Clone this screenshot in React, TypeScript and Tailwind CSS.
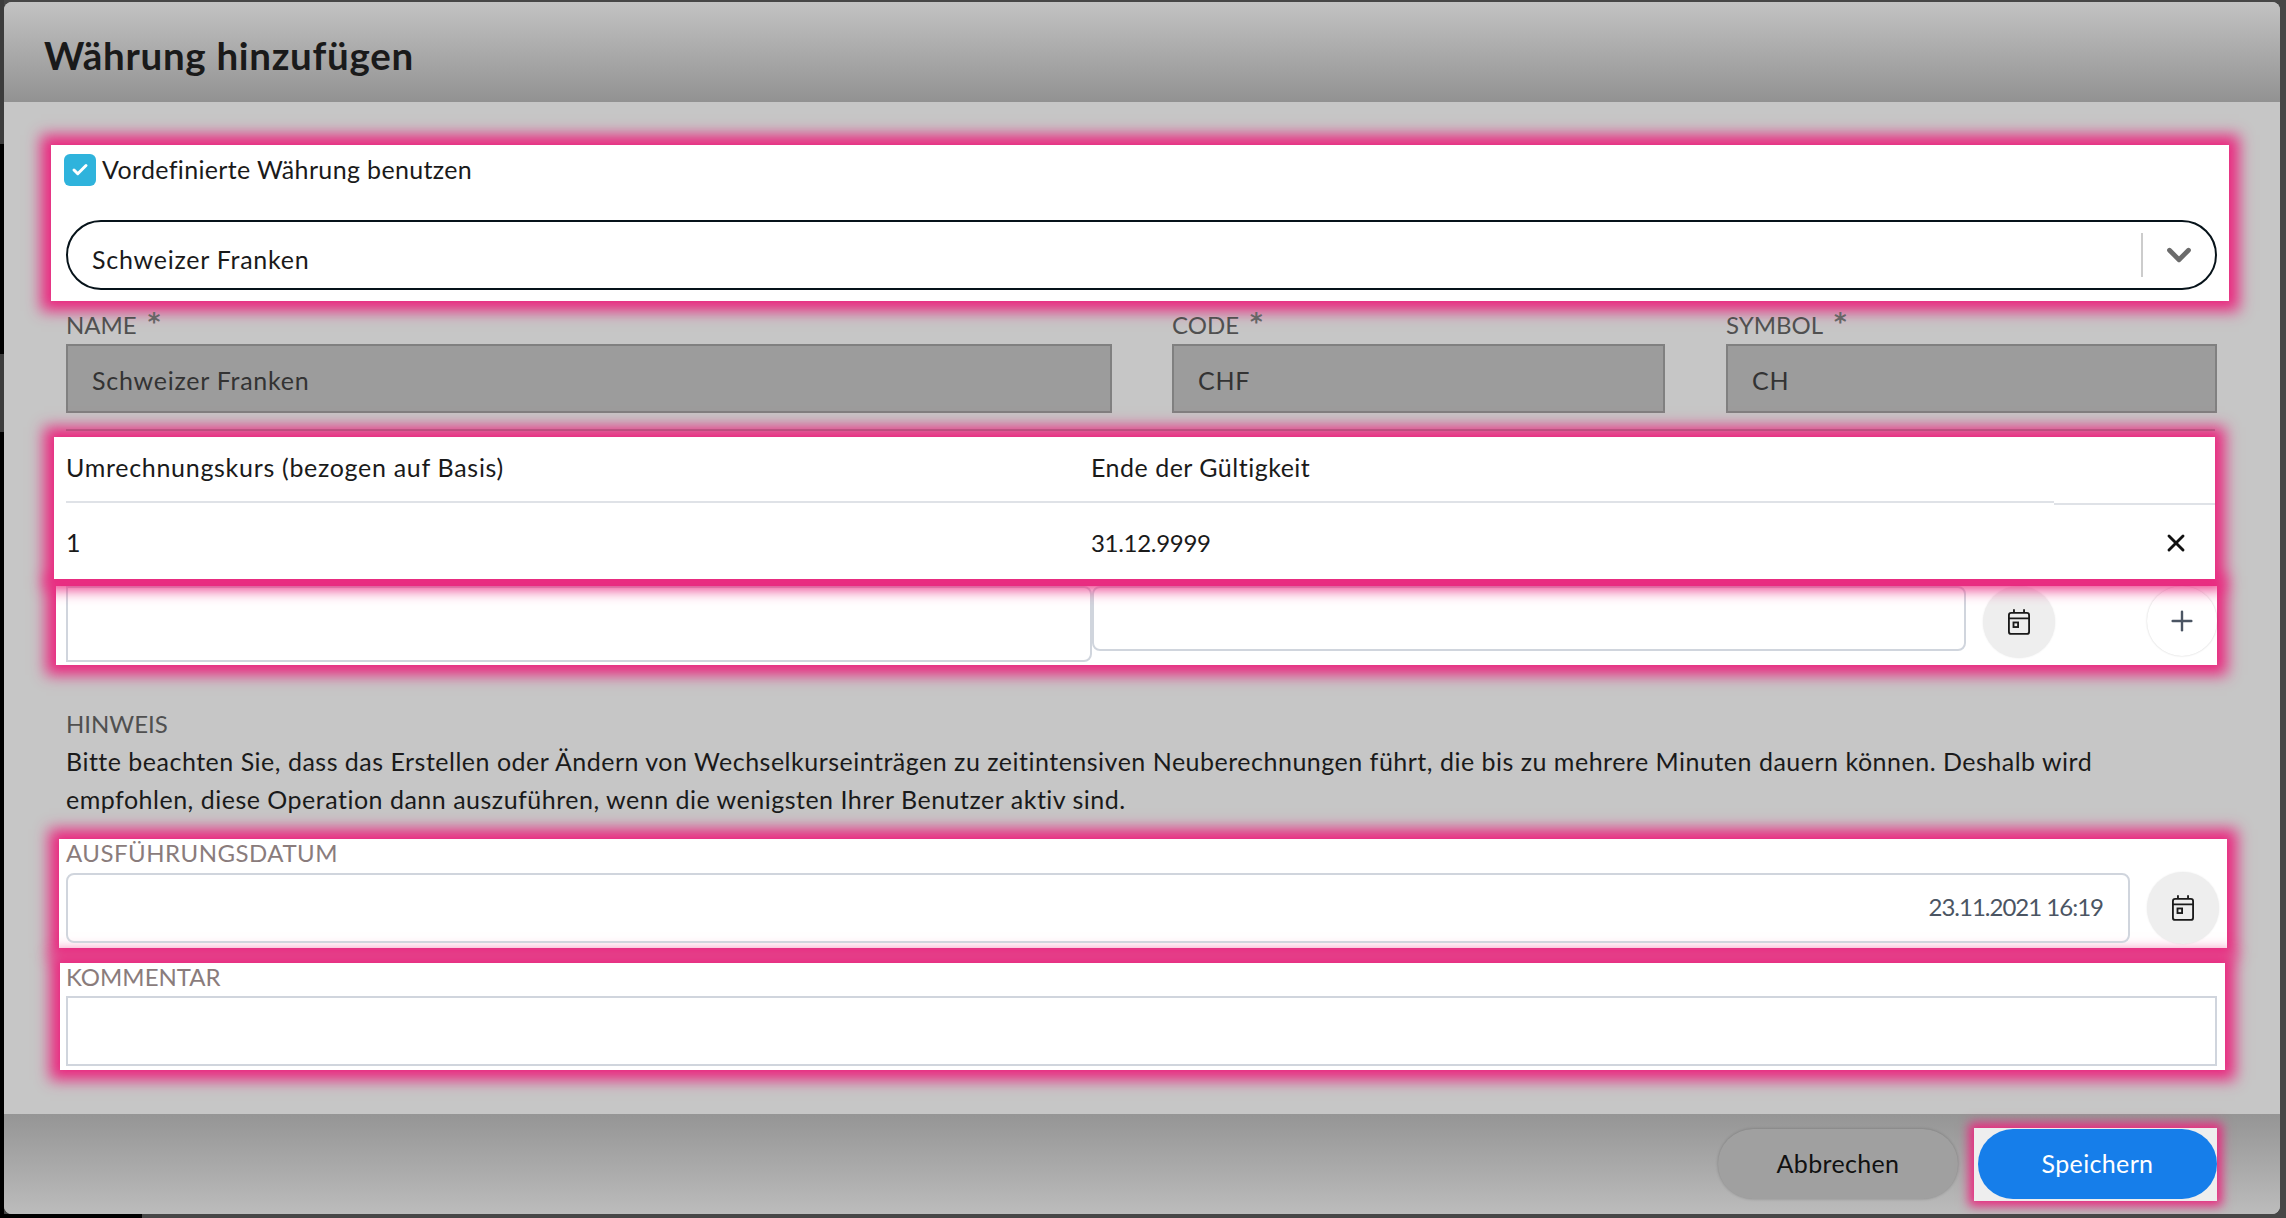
import { Check, ChevronDown, Plus, X } from 'lucide-react';

function CalendarIcon() {
  return (
    <svg width="22" height="26" viewBox="0 0 24 28" fill="none" stroke="#1a1a1a" strokeWidth="2">
      <rect x="1" y="4" width="22" height="23" rx="2.5" />
      <path d="M1 10h22M6.5 0v4M17.5 0v4" />
      <rect x="6" y="14.5" width="5" height="5" />
    </svg>
  );
}

function CircleButton({ white, children }: { white?: boolean; children: React.ReactNode }) {
  return (
    <div
      className={
        white
          ? 'flex h-[70px] w-[70px] shrink-0 items-center justify-center rounded-full bg-white shadow-[0_0_2px_rgba(0,0,0,0.2)]'
          : 'flex h-[72px] w-[72px] shrink-0 items-center justify-center rounded-full bg-[#eeeeee] shadow-[0_0_2px_rgba(0,0,0,0.1)]'
      }
    >
      {children}
    </div>
  );
}

function ReadonlyField({ label, value, className }: { label: string; value: string; className: string }) {
  return (
    <div className={className}>
      <div className="flex h-[28px] items-center pb-[10px] text-[24px] tracking-normal text-[#505050]">
        {label}
        <span className="ml-[11px] h-[22px] font-['DejaVu_Sans'] text-[24px] leading-[16px] font-bold text-[#666666]">*</span>
      </div>
      <div className="flex h-[69px] items-center border-2 border-[#808080] bg-[#9c9c9c] px-[24px] pt-[4px] tracking-[0.75px] text-[#333333]">
        {value}
      </div>
    </div>
  );
}

export default function App() {
  return (
    <div
      className="relative flex h-[1218px] w-[2286px] overflow-hidden bg-[#474747] pr-[6px] pb-[4px] text-[25px] tracking-[0.35px] text-[#1a1a1a]"
      style={{ fontFamily: 'Lato, "Open Sans", sans-serif' }}
    >
      {/* what shows of the page behind the dialog */}
      <div className="flex w-[4px] shrink-0 flex-col">
        <div className="h-[144px] bg-[#3c3c3c]" />
        <div className="h-[210px] bg-black" />
        <div className="h-[78px] bg-[#3c3c3c]" />
        <div className="flex-1 bg-black" />
      </div>
      <div className="absolute bottom-0 left-0 h-[4px] w-[142px] bg-black" />

      <div className="mt-[2px] flex flex-1 flex-col overflow-hidden rounded-lg bg-[#c6c6c6]">
        {/* Header */}
        <div className="flex h-[100px] shrink-0 items-center bg-gradient-to-b from-[#c3c3c3] to-[#929292] pl-[40px] pt-[8px]">
          <h1 className="text-[38.5px] font-bold tracking-[0.7px] text-[#1a1a1a]">Währung hinzufügen</h1>
        </div>

        {/* Body */}
        <div className="flex-1 pl-[62px] pr-[63px]">
          <div className="mt-[43px] -ml-[15px] -mr-[12px] h-[156px] bg-white pl-[15px] pr-[12px] pt-[9px] shadow-[0_0_14px_10px_#ea287f]">
            <div className="flex h-[32px] items-center gap-[6px]">
              <span className="-ml-[2px] flex h-[32px] w-[32px] items-center justify-center rounded-md bg-[#2fb3dc]">
                <Check size={18} strokeWidth={4} color="#ffffff" />
              </span>
              <span>Vordefinierte Währung benutzen</span>
            </div>
            <div className="mt-[34px] flex h-[70px] items-center rounded-full border-2 border-[#07131a] pl-[24px]">
              <span className="flex-1 pt-[10px] tracking-[0.75px]">Schweizer Franken</span>
              <span className="h-[44px] w-[2px] bg-[#cccccc]" />
              <span className="flex w-[72px] justify-center">
                <ChevronDown size={38} strokeWidth={3} color="#6b6b6b" />
              </span>
            </div>
          </div>

          <div className="mt-[15px] flex">
            <ReadonlyField label="NAME" value="Schweizer Franken" className="w-[1046px]" />
            <ReadonlyField label="CODE" value="CHF" className="ml-[60px] w-[493px]" />
            <ReadonlyField label="SYMBOL" value="CH" className="ml-[61px] flex-1" />
          </div>

          {/* Kurs table */}
          <div className="relative mt-[24px] -ml-[12px] mr-[2px] flex h-[142px] flex-col bg-white pl-[12px] shadow-[0_0_14px_10px_#ea287f]">
            <div className="absolute -top-[8px] left-[12px] right-0 h-[2px] bg-black/15" />
            <div className="flex items-start">
              <div className="flex h-[66px] w-[1988px] items-center border-b-2 border-[#dfe2e7] pb-[3px]">
                <span className="w-[1025px] tracking-[0.7px]">Umrechnungskurs (bezogen auf Basis)</span>
                <span className="tracking-[0.5px]">Ende der Gültigkeit</span>
              </div>
              <div className="h-[68px] flex-1 border-b-2 border-[#dfe2e7]" />
            </div>
            <div className="flex flex-1 items-center pt-[2px]">
              <span className="w-[1025px]">1</span>
              <span className="flex-1 text-[24px] tracking-[-0.3px]">31.12.9999</span>
              <X size={28} strokeWidth={2.5} color="#111111" className="mr-[25px]" />
            </div>
          </div>

          <div className="mt-[7px] -ml-[10px] flex h-[79px] items-start bg-white pl-[10px] shadow-[0_0_14px_10px_#ea287f]">
            <div className="h-[76px] w-[1026px] rounded-r-lg border-2 border-[#d0d5dd]" />
            <div className="h-[65px] w-[874px] rounded-lg border-2 border-[#d0d5dd]" />
            <div className="ml-[17px]">
              <CircleButton>
                <CalendarIcon />
              </CircleButton>
            </div>
            <div className="ml-auto">
              <CircleButton white>
                <Plus size={32} strokeWidth={1.8} color="#4b5563" />
              </CircleButton>
            </div>
          </div>

          {/* Hinweis */}
          <div className="mt-[40px] text-[24px] leading-[38px] tracking-normal text-[#505050]">HINWEIS</div>
          <p className="-mt-[1px] leading-[38px] tracking-[0.5px] text-[#1a1a1a]">
            Bitte beachten Sie, dass das Erstellen oder Ändern von Wechselkurseinträgen zu zeitintensiven Neuberechnungen führt, die bis zu mehrere Minuten dauern können. Deshalb wird
            <br />
            empfohlen, diese Operation dann auszuführen, wenn die wenigsten Ihrer Benutzer aktiv sind.
          </p>

          <div className="mt-[21px] -ml-[7px] -mr-[10px] h-[109px] bg-white pl-[7px] pr-[8px] shadow-[0_0_14px_10px_#ea287f]">
            <div className="h-[33px] text-[24px] leading-[28px] tracking-[0.5px] text-[#8a7c7c]">AUSFÜHRUNGSDATUM</div>
            <div className="flex items-center gap-[17px]">
              <div className="flex h-[70px] flex-1 items-center justify-end rounded-lg border-2 border-[#d0d5dd] pb-[2px] pr-[25px] text-[24px] tracking-[-1px] text-[#4b5563]">
                23.11.2021 16:19
              </div>
              <CircleButton>
                <CalendarIcon />
              </CircleButton>
            </div>
          </div>

          <div className="mt-[15px] -ml-[6px] -mr-[8px] h-[107px] bg-white pl-[6px] pr-[8px] shadow-[0_0_14px_10px_#ea287f]">
            <div className="h-[33px] text-[24px] leading-[28px] tracking-normal text-[#8a7c7c]">KOMMENTAR</div>
            <div className="h-[70px] border-2 border-[#d0d5dd]" />
          </div>
        </div>

        {/* Footer */}
        <div className="flex h-[100px] shrink-0 items-center justify-end bg-gradient-to-b from-[#959595] to-[#bcbcbc] pr-[63px]">
          <button className="h-[70px] w-[240px] rounded-full bg-[#a0a0a0] text-[#111111] shadow-[0_0_3px_rgba(0,0,0,0.25)]">
            Abbrechen
          </button>
          <div className="ml-[16px] flex h-[73px] w-[243px] items-center justify-end bg-[#eeeeee] shadow-[0_0_10px_5px_#ea287f]">
            <button className="h-[70px] w-[239px] rounded-full bg-[#167eea] text-white">Speichern</button>
          </div>
        </div>
      </div>
    </div>
  );
}
